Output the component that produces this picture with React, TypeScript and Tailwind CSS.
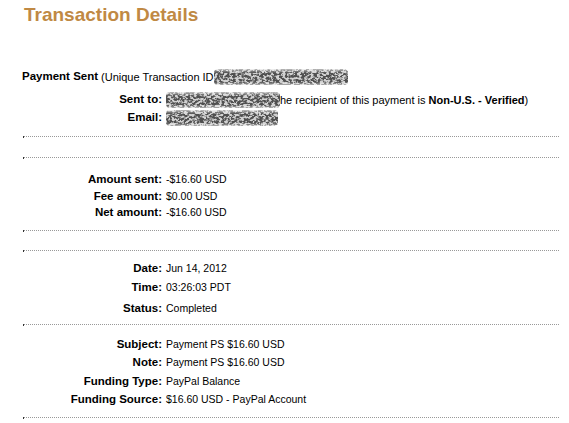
import React, { useId } from 'react';

type Row = {
  label: string;
  value: React.ReactNode;
  className: string;
};

// scribbled-out part of the receipt, drawn as noise
const Smudge = ({ width, seed }: { width: number; seed: number }) => {
  const id = useId().replace(/:/g, '');
  return (
    <svg width={width} height={16} className="block shrink-0">
      <defs>
        <filter id={`n${id}`} x="0" y="0" width="100%" height="100%">
          <feTurbulence type="fractalNoise" baseFrequency="0.32 0.45" numOctaves="3" seed={seed} />
          <feColorMatrix
            type="matrix"
            values="0 0 0 0 0.08  0 0 0 0 0.08  0 0 0 0 0.08  6 0 0 0 -2.4"
          />
        </filter>
        <linearGradient id={`g${id}`} x1="0" y1="0" x2="0" y2="1">
          <stop offset="0" stopColor="#fff" stopOpacity="0.3" />
          <stop offset="0.25" stopColor="#fff" stopOpacity="1" />
          <stop offset="0.8" stopColor="#fff" stopOpacity="1" />
          <stop offset="1" stopColor="#fff" stopOpacity="0.35" />
        </linearGradient>
        <mask id={`m${id}`}>
          <rect width={width} height={16} fill={`url(#g${id})`} rx={4} />
        </mask>
      </defs>
      <rect width={width} height={16} fill="#9a9a9a" opacity="0.45" mask={`url(#m${id})`} />
      <rect width={width} height={16} filter={`url(#n${id})`} mask={`url(#m${id})`} />
    </svg>
  );
};

const Divider = ({ className }: { className: string }) => (
  <div className={`relative ml-[23px] w-[536px] border-t border-dotted border-[#999] ${className}`}>
    <span className="absolute left-0 top-[-1px] h-[2px] w-[1px] bg-[#333]" />
  </div>
);

const LabelRow = ({ label, value, className }: Row) => (
  <div className={`flex items-center ${className}`}>
    <div className="w-[166px] shrink-0 pr-[4px] text-right text-[11.5px] font-bold">{label}</div>
    <div>{value}</div>
  </div>
);

export default function App() {
  const amounts: Row[] = [
    { label: 'Amount sent:', value: '-$16.60 USD', className: 'mt-[14px] h-[16px]' },
    { label: 'Fee amount:', value: '$0.00 USD', className: 'mt-[1px] h-[16px]' },
    { label: 'Net amount:', value: '-$16.60 USD', className: 'h-[16px]' },
  ];

  const dates: Row[] = [
    { label: 'Date:', value: 'Jun 14, 2012', className: 'mt-[9px] h-[18px]' },
    { label: 'Time:', value: '03:26:03 PDT', className: 'mt-[1px] h-[18px]' },
    { label: 'Status:', value: 'Completed', className: 'mt-[3px] h-[18px]' },
  ];

  const funding: Row[] = [
    { label: 'Subject:', value: 'Payment PS $16.60 USD', className: 'mt-[11px] h-[18px]' },
    { label: 'Note:', value: 'Payment PS $16.60 USD', className: 'h-[18px]' },
    { label: 'Funding Type:', value: 'PayPal Balance', className: 'mt-[1px] h-[18px]' },
    { label: 'Funding Source:', value: '$16.60 USD - PayPal Account', className: 'h-[18px]' },
  ];

  return (
    <div className="h-[423px] w-[569px] overflow-hidden bg-white font-['Liberation_Sans',Arial,sans-serif] text-[10.5px] text-black">
      <h1 className="ml-[24px] mt-[3px] h-[24px] text-[19px] font-bold leading-[24px] text-[#c08944]">
        Transaction Details
      </h1>

      <div className="ml-[22px] mt-[41px] flex h-[18px] items-center text-[11px]">
        <span className="text-[11.5px] font-bold">Payment Sent</span>
        <span className="ml-[3px]">(Unique Transaction ID</span>
        <Smudge width={134} seed={3} />
      </div>

      <LabelRow
        label="Sent to:"
        className="mt-[5px] h-[18px]"
        value={
          <span className="flex items-center text-[11px]">
            <Smudge width={114} seed={7} />
            <span>
              he recipient of this payment is <b>Non-U.S. - Verified</b>)
            </span>
          </span>
        }
      />
      <LabelRow label="Email:" className="h-[18px]" value={<Smudge width={112} seed={11} />} />

      <Divider className="mt-[9px]" />
      <Divider className="mt-[20px]" />

      {amounts.map((row) => (
        <LabelRow key={row.label} {...row} />
      ))}

      <Divider className="mt-[9px]" />
      <Divider className="mt-[19px]" />

      {dates.map((row) => (
        <LabelRow key={row.label} {...row} />
      ))}

      <Divider className="mt-[6px]" />

      {funding.map((row) => (
        <LabelRow key={row.label} {...row} />
      ))}

      <Divider className="mt-[8px]" />
    </div>
  );
}
